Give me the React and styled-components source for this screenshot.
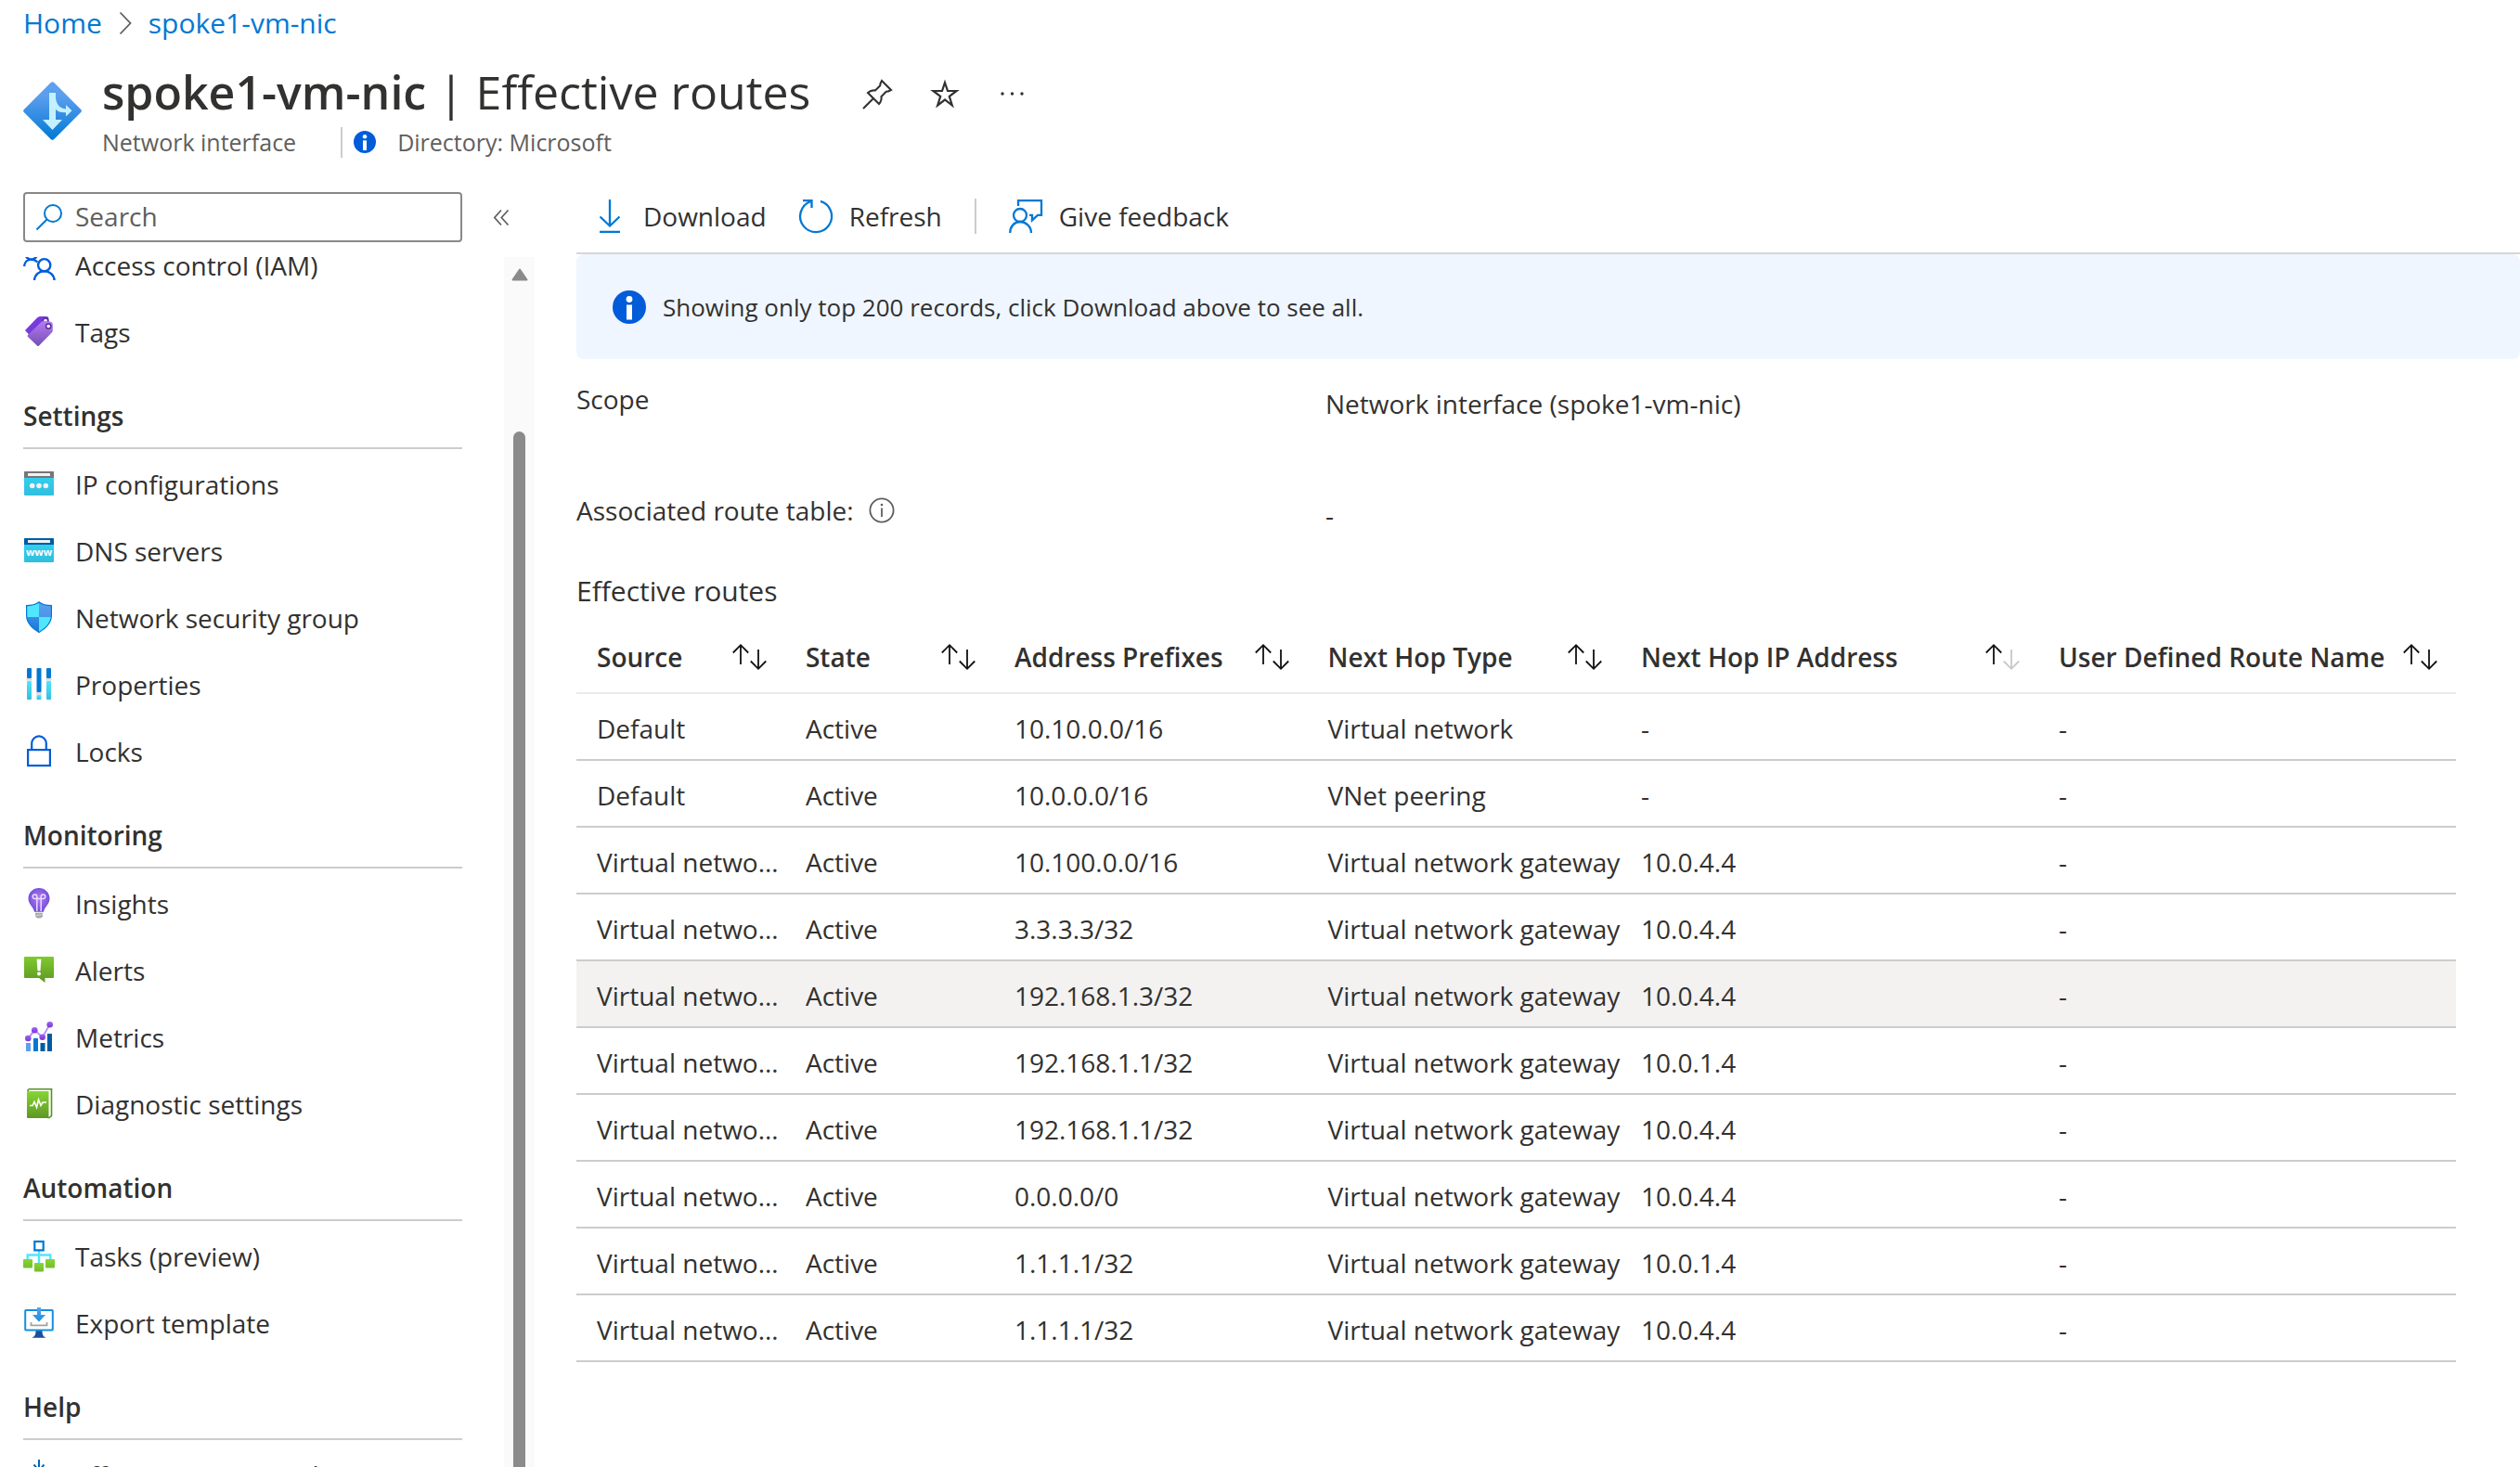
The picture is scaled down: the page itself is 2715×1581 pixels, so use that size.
import React from "react";
import styled, { createGlobalStyle, css } from "styled-components";

const color = {
  text: "#323130",
  muted: "#605e5c",
  link: "#0078d4",
  line: "#cccccc",
  softLine: "#ebebeb",
  info: "#015cda",
};

const GlobalStyle = createGlobalStyle`
  *, *::before, *::after { box-sizing: border-box; }
  body {
    margin: 0;
    background: #ffffff;
    color: ${color.text};
    font-family: "Open Sans", "Noto Sans", sans-serif;
    font-size: 28px;
    line-height: 40px;
  }
  a { color: inherit; text-decoration: none; }
  button {
    font: inherit;
    color: inherit;
    background: none;
    border: 0;
    padding: 0;
    cursor: pointer;
  }
  svg { display: block; flex: none; overflow: visible; }
`;

const Page = styled.div`
  display: flex;
  flex-direction: column;
  height: 100vh;
  overflow: hidden;
`;

const Breadcrumb = styled.nav`
  display: flex;
  align-items: center;
  gap: 19px;
  height: 50px;
  padding: 0 25px;
  color: ${color.link};
  font-size: 30px;
`;

const Header = styled.header`
  display: flex;
  align-items: center;
  gap: 22px;
  padding: 15px 25px 23px;
`;

const TitleRow = styled.div`
  display: flex;
  align-items: center;
  gap: 56px;
`;

const Title = styled.h1`
  margin: 0;
  font-size: 50px;
  line-height: 68px;
  font-weight: 400;
  white-space: nowrap;

  strong { font-weight: 600; }
`;

const TitleActions = styled.div`
  display: flex;
  gap: 41px;
  padding-top: 3px;
`;

const Subtitle = styled.div`
  display: flex;
  align-items: center;
  height: 40px;
  color: ${color.muted};
  font-size: 25px;
`;

const Directory = styled.span`
  display: flex;
  align-items: center;
  gap: 23px;
  height: 33px;
  margin-left: 48px;
  padding-left: 12px;
  border-left: 2px solid ${color.line};
`;

const Body = styled.div`
  display: flex;
  flex: 1;
  min-height: 0;
`;

const Sidebar = styled.aside`
  display: flex;
  flex-direction: column;
  flex: none;
  width: 576px;
`;

const SearchRow = styled.div`
  display: flex;
  align-items: center;
  gap: 25px;
  padding: 11px 0 16px 25px;
`;

const SearchBox = styled.label`
  display: flex;
  align-items: center;
  gap: 14px;
  width: 473px;
  height: 54px;
  padding: 0 12px;
  border: 2px solid #8a8886;
  border-radius: 4px;

  input {
    flex: 1;
    min-width: 0;
    padding: 0 0 2px;
    border: 0;
    outline: 0;
    background: none;
    color: ${color.text};
    font: inherit;
  }
  input::placeholder { color: ${color.muted}; opacity: 1; }
`;

const IconButton = styled.button`
  display: flex;
  align-items: center;
  justify-content: center;
  width: ${(p) => p.$size}px;
  height: ${(p) => p.$size}px;
`;

const MenuViewport = styled.div`
  display: flex;
  flex: 1;
  min-height: 0;
  overflow: hidden;
`;

const Menu = styled.nav`
  flex: 1;
  margin-top: -27px;
  padding: 0 45px 0 25px;
`;

const MenuList = styled.ul`
  margin: 0;
  padding: 0;
  list-style: none;
`;

const MenuLink = styled.a`
  display: flex;
  align-items: center;
  gap: 22px;
  height: 72px;
  white-space: nowrap;
`;

const MenuHeading = styled.h2`
  margin: 0 0 2px;
  padding: 34px 0 14px;
  border-bottom: 2px solid ${color.line};
  font-size: 28px;
  line-height: 40px;
  font-weight: 600;
`;

const ScrollTrack = styled.div`
  display: flex;
  flex-direction: column;
  align-items: center;
  width: 33px;
  padding-top: 12px;
  background: #fafafa;
`;

const ScrollThumb = styled.div`
  flex: 1;
  width: 13px;
  margin-top: 162px;
  border-radius: 7px 7px 0 0;
  background: #8b8b8b;
`;

const Main = styled.main`
  flex: 1;
  min-width: 0;
  margin-left: 45px;
`;

const Toolbar = styled.div`
  display: flex;
  align-items: center;
  gap: 35px;
  height: 78px;
  padding: 0 18px 2px;
  border-bottom: 2px solid #d6d6d6;
`;

const ToolButton = styled.button`
  display: flex;
  align-items: center;
  gap: 18px;
`;

const ToolDivider = styled.span`
  width: 2px;
  height: 38px;
  background: ${color.line};
`;

const Banner = styled.div`
  display: flex;
  align-items: center;
  gap: 18px;
  height: 113px;
  padding: 0 39px;
  border-radius: 8px;
  background: #eff6ff;
  font-size: 26px;
`;

const Content = styled.div`
  padding: 23px 69px 0 0;
`;

const Facts = styled.dl`
  display: grid;
  grid-template-columns: 807px 1fr;
  row-gap: 75px;
  margin: 0;
`;

const FactName = styled.dt`
  display: flex;
  align-items: center;
  gap: 16px;
  height: 40px;
`;

const FactValue = styled.dd`
  margin: 0;
  padding-top: 5px;
`;

const SectionTitle = styled.h2`
  margin: 42px 0 11px;
  font-size: 30px;
  line-height: 40px;
  font-weight: 400;
`;

const Table = styled.table`
  width: 100%;
  table-layout: fixed;
  border-collapse: separate;
  border-spacing: 0;
`;

const HeadCell = styled.th`
  width: ${(p) => p.$share}%;
  height: 80px;
  padding: 2px 20px 0 22px;
  border-bottom: 2px solid ${color.softLine};
  font-weight: 600;
  text-align: left;
`;

const SortButton = styled.button`
  display: flex;
  align-items: center;
  justify-content: space-between;
  width: 100%;
  white-space: nowrap;
`;

const Row = styled.tr`
  ${(p) => p.$active && css`background: #f3f2f1;`}
`;

const Cell = styled.td`
  height: 72px;
  padding: 3px 0 0 22px;
  border-bottom: 2px solid ${color.line};
  overflow: hidden;
  white-space: nowrap;
  text-overflow: ellipsis;
`;

/* Header and toolbar drawings */

const Logo = () => (
  <svg width="63" height="63" viewBox="0 0 63 63" aria-hidden="true">
    <defs>
      <linearGradient id="logo" x1="0" y1="0" x2="0" y2="1">
        <stop offset="0" stopColor="#5ea0ef" />
        <stop offset="0.25" stopColor="#5a9eee" />
        <stop offset="1" stopColor="#0078d4" />
      </linearGradient>
    </defs>
    <path d="M30 .8Q31.500-.5 33 .8L62.200 30Q63.500 31.500 62.200 33L33 62.200Q31.500 63.500 30 62.200L.8 33Q-.5 31.500.8 30Z" fill="url(#logo)" />
    <path d="M28 12h7v6c1 6 4 11 11 11.500V25l6.500 6.200L46 37.500v-4.200c-5 .2-9-1-11-3.500V41h7L31.500 52 21 41h7Z" fill="#c3f1ff" />
  </svg>
);

const InfoBadge = ({ size }) => (
  <svg width={size} height={size} viewBox="0 0 36 36" aria-hidden="true">
    <circle cx="18" cy="18" r="18" fill={color.info} />
    <circle cx="18" cy="9.500" r="3.400" fill="#fff" />
    <rect x="15" y="15.500" width="6" height="16" fill="#fff" />
  </svg>
);

const InfoOutline = () => (
  <svg width="28" height="28" viewBox="0 0 28 28" fill="none" stroke="#605e5c" strokeWidth="1.800" aria-hidden="true">
    <circle cx="14" cy="14" r="12.600" />
    <path d="M14 11.500v9.500" />
    <circle cx="14" cy="8" r="1.300" fill="#605e5c" stroke="none" />
  </svg>
);

const Chevron = () => (
  <svg width="12" height="24" viewBox="0 0 12 24" fill="none" stroke="#605e5c" strokeWidth="1.800" aria-hidden="true">
    <path d="M.5.500 11.500 12 .5 23.500" />
  </svg>
);

const Pin = () => (
  <svg width="32" height="32" viewBox="0 0 32 32" fill="none" stroke={color.text} strokeWidth="2.100" aria-hidden="true">
    <path d="M21 2 31 12l-3 1.500c-1 .2-1.800-.2-2.500.5L20.500 19c.5 3-.2 5.500-2.500 8L6 15c2.500-2.300 5-3 8-2.500l5-5c.7-.7.300-1.500.5-2.500ZM12 21 1 32" />
  </svg>
);

const Star = () => (
  <svg width="32" height="32" viewBox="0 0 32 32" fill="none" stroke={color.text} strokeWidth="2.200" strokeMiterlimit="8" aria-hidden="true">
    <path d="m16 4 3 9h9.500l-7.700 5.800 3 9.700L16 22.500l-7.800 6 3-9.700L3.500 13H13Z" />
  </svg>
);

const Dots = () => (
  <svg width="32" height="32" viewBox="0 0 32 32" fill={color.text} aria-hidden="true">
    <circle cx="5" cy="16" r="1.700" />
    <circle cx="15.500" cy="16" r="1.700" />
    <circle cx="26" cy="16" r="1.700" />
  </svg>
);

const SearchIcon = () => (
  <svg width="28" height="28" viewBox="0 0 28 28" fill="none" stroke={color.link} strokeWidth="2" aria-hidden="true">
    <circle cx="18" cy="10" r="9" />
    <path d="M11.500 16.500.5 27.500" />
  </svg>
);

const Collapse = () => (
  <svg width="16" height="17" viewBox="0 0 16 17" fill="none" stroke="#605e5c" strokeWidth="1.700" aria-hidden="true">
    <path d="M8 .5.8 8.500 8 16.500M15.500.500 8.300 8.500l7.200 8" />
  </svg>
);

const ScrollUp = () => (
  <svg width="18" height="14" viewBox="0 0 18 14" aria-hidden="true">
    <path d="M9 1.500 16.500 12.500h-15Z" fill="#8b8b8b" stroke="#8b8b8b" strokeWidth="2" strokeLinejoin="round" />
  </svg>
);

const ToolIcon = ({ children }) => (
  <svg width="36" height="36" viewBox="0 0 36 36" fill="none" stroke={color.link} strokeWidth="2.300" aria-hidden="true">
    {children}
  </svg>
);

const Download = () => (
  <ToolIcon>
    <path d="M18 0v28M7.500 18.500 18 28.500l10.500-10M7 34.800h22" />
  </ToolIcon>
);

const Refresh = () => (
  <ToolIcon>
    <path d="M23 1.800A17 17 0 1 1 12 2.200M4 1.200h9.500V9" />
  </ToolIcon>
);

const Feedback = () => (
  <ToolIcon>
    <circle cx="12" cy="17" r="7" />
    <path d="M1.200 36c0-7 4.800-12 10.800-12s12 5 12 12M10 7V1.200h25v15.600h-4l-6 5.500v-5.500h-3" />
  </ToolIcon>
);

const Sort = ({ dimDown }) => (
  <svg width="37" height="28" viewBox="0 0 37 28" fill="none" strokeWidth="1.800" aria-hidden="true">
    <path d="M9 22V1.500M.8 9.500 9 1.200l8.200 8.300" stroke="#111" />
    <path d="M28 6v20.500M19.800 18.500l8.200 8.300 8.200-8.300" stroke={dimDown ? "#c8c8c8" : "#111"} />
  </svg>
);

/* Menu drawings, all on a 34 x 34 board */

const MenuSvg = ({ children }) => (
  <svg width="34" height="34" viewBox="0 0 34 34" fill="none" aria-hidden="true">
    {children}
  </svg>
);

const Fade = ({ id, from, to }) => (
  <linearGradient id={id} x1="0" y1="0" x2="0" y2="1">
    <stop offset="0" stopColor={from} />
    <stop offset="1" stopColor={to} />
  </linearGradient>
);

const AccessIcon = () => (
  <MenuSvg>
    <g stroke={color.info} strokeWidth="2.400">
      <circle cx="8.700" cy="4" r="6.600" />
      <path d="M1 18C1.500 13.500 4.500 10.600 8.700 10.600c3 0 5 .9 6.600 3" />
      <circle cx="22.700" cy="16.700" r="6.600" />
      <path d="M12 33c.6-6 5-9.700 10.700-9.700S33 27 33.600 33" />
    </g>
  </MenuSvg>
);

const TagsIcon = () => (
  <MenuSvg>
    <defs><Fade id="tag" from="#b77af4" to="#7350b0" /></defs>
    <path d="M2 15 15 1.500Q16.500 0 18 0h7q2 0 2.500 2L28 9 12 26Z" fill="#773adc" />
    <circle cx="24" cy="4.500" r="2.600" fill="#fff" stroke="#552f99" strokeWidth="1.500" />
    <path d="M5 20 19.500 6Q20.500 5 22 5l7 .5Q31.500 6 31.800 8v7q0 1.500-1 2.500L17 31.500q-1 1-2 0L5 22Q4 21 5 20Z" fill="url(#tag)" />
    <circle cx="27.200" cy="10.500" r="2.600" fill="#fff" stroke="#552f99" strokeWidth="1.500" />
  </MenuSvg>
);

const BrowserIcon = ({ id, bar, children }) => (
  <MenuSvg>
    <defs><Fade id={id} from="#32d4f5" to="#32bedd" /></defs>
    <rect x="1" y="3" width="32" height="26" rx="1" fill={`url(#${id})`} />
    <path d="M1 10V4q0-1 1-1h30q1 0 1 1v6Z" fill={bar} />
    <rect x="5" y="5" width="24" height="3" rx=".5" fill="#f2f2f2" />
    {children}
  </MenuSvg>
);

const IpIcon = () => (
  <BrowserIcon id="ip" bar="#767676">
    <g fill="#f2f2f2">
      <circle cx="9.700" cy="18.500" r="2.800" />
      <circle cx="17" cy="18.500" r="2.800" />
      <circle cx="24.300" cy="18.500" r="2.800" />
    </g>
  </BrowserIcon>
);

const DnsLabel = styled.text`
  font-family: "Open Sans", sans-serif;
  font-size: 11px;
  font-weight: 700;
  fill: #ffffff;
`;

const DnsIcon = () => (
  <BrowserIcon id="dns" bar="#005ba1">
    <DnsLabel x="17" y="22" textAnchor="middle">www</DnsLabel>
  </BrowserIcon>
);

const ShieldIcon = () => (
  <MenuSvg>
    <defs>
      <clipPath id="shield"><path d="M17 .8C13.500 3 9 4.200 4.200 4.300V14.500C4.200 23 12 28.800 17 31.800 22 28.800 29.800 23 29.800 14.500V4.300C25 4.200 20.500 3 17 .8Z" /></clipPath>
      <Fade id="shieldTop" from="#5ea0ef" to="#4a94e8" />
      <Fade id="shieldLow" from="#3a8ce4" to="#1078d4" />
    </defs>
    <path d="M17-1C13 2 9 3 3 3V14.500C3 24 12 30 17 33.200 22 30 31 24 31 14.500V3C25 3 21 2 17-1Z" fill="#0078d4" />
    <g clipPath="url(#shield)">
      <rect x="3" y="0" width="14" height="16" fill="#50e6ff" />
      <rect x="17" y="0" width="14" height="16" fill="url(#shieldTop)" />
      <rect x="3" y="16" width="14" height="17" fill="url(#shieldLow)" />
      <rect x="17" y="16" width="14" height="17" fill="#50e6ff" />
    </g>
  </MenuSvg>
);

const PropertiesIcon = () => (
  <MenuSvg>
    <defs><Fade id="prop" from="#50e6ff" to="#32bedd" /></defs>
    {[[4, 10], [14.5, 25], [25, 10]].map(([x, y]) => (
      <g key={x}>
        <rect x={x} y="-1" width="5" height={y + 1} rx="1" fill="#0078d4" />
        <rect x={x} y={y + 3} width="5" height={30 - y} rx="1" fill="url(#prop)" />
        <rect x={x - 0.5} y={y} width="6" height="2.800" rx=".8" fill="#dcdcdc" />
      </g>
    ))}
  </MenuSvg>
);

const LockIcon = () => (
  <MenuSvg>
    <g stroke={color.info} strokeWidth="2.200">
      <rect x="5.100" y="15.100" width="23.800" height="17" />
      <path d="M9.200 15V8.200a7.800 7.800 0 0 1 15.600 0V15" />
    </g>
  </MenuSvg>
);

const InsightsIcon = () => (
  <MenuSvg>
    <defs>
      <radialGradient id="bulb" cx=".5" cy=".45" r=".6">
        <stop offset="0" stopColor="#b77af4" />
        <stop offset="1" stopColor="#6548d6" />
      </radialGradient>
    </defs>
    <path d="M17 0C23 0 28.500 4.700 28.500 11.300 28.500 18 23 20 22 25.800H12C11 20 5.500 18 5.500 11.300 5.500 4.700 11 0 17 0Z" fill="url(#bulb)" />
    <path d="M14.800 25V11.500h-2.400a2.300 2.300 0 1 1 2.400-2.300v2.300h4.400V9.200a2.300 2.300 0 1 1 2.400 2.300h-2.400V25" stroke="#e9dcfb" strokeWidth="1.500" />
    <path d="M13 26.800h8v3.600L19 32.500h-4l-2-2.100Z" fill="#a9a9a9" />
    <path d="M13 29.800l8-1.200" stroke="#e0e0e0" strokeWidth=".8" />
  </MenuSvg>
);

const AlertsIcon = () => (
  <MenuSvg>
    <defs><Fade id="alert" from="#7fcb2d" to="#5e9624" /></defs>
    <path d="M2 2h30q1 0 1 1v21q0 1-1 1h-8.500v5L17 25H2q-1 0-1-1V3q0-1 1-1Z" fill="url(#alert)" />
    <path d="M14.600 4.800h4.800l-.9 12.500h-3Z" fill="#fff" />
    <circle cx="17" cy="20.500" r="2" fill="#fff" />
  </MenuSvg>
);

const MetricsIcon = () => (
  <MenuSvg>
    <defs><Fade id="dot" from="#a067f0" to="#7a35d6" /></defs>
    <rect x="3" y="23" width="5" height="9" fill="#5ea0ef" />
    <rect x="11" y="18" width="5" height="14" fill="#0078d4" />
    <rect x="18.500" y="23" width="5" height="9" fill="#005ba1" />
    <rect x="26" y="13" width="5" height="19" fill="#005ba1" />
    <path d="M5.300 18 12.300 9.300 20.700 16.700 28.700 3" stroke="#b796f9" strokeWidth="2" />
    <g fill="url(#dot)">
      <circle cx="5.300" cy="18" r="3.300" />
      <circle cx="12.300" cy="9.300" r="3.300" />
      <circle cx="20.700" cy="16.700" r="3.300" />
      <circle cx="28.700" cy="3.300" r="3.300" />
    </g>
  </MenuSvg>
);

const DiagnosticIcon = () => (
  <MenuSvg>
    <defs><Fade id="book" from="#86d633" to="#5e9624" /></defs>
    <path d="M5 3Q5 .8 7 .8H30.500V29.500L28 31.500H26" fill="#fff" stroke="#57911f" strokeWidth="1.600" />
    <rect x="4" y="3" width="23.500" height="29" rx=".8" fill="url(#book)" />
    <path d="M7 18.500h3l2-4 2.500 6 2-8.500 2.500 6.500 2-3.500h4" stroke="#fff" strokeWidth="1.600" />
  </MenuSvg>
);

const TasksIcon = () => (
  <MenuSvg>
    <defs><Fade id="task" from="#86d633" to="#76bc2d" /></defs>
    <path d="M17 11v14M4.700 21v-5.500h24.600V21" stroke="#50e6ff" strokeWidth="2.400" />
    <rect x="12.300" y="1" width="9.400" height="9.400" fill="#fff" stroke="#0078d4" strokeWidth="2.200" />
    <rect x="0" y="20" width="10" height="9.500" rx="1" fill="url(#task)" />
    <rect x="12" y="24" width="10" height="9.500" rx="1" fill="url(#task)" />
    <rect x="24" y="20" width="10" height="9.500" rx="1" fill="url(#task)" />
  </MenuSvg>
);

const ExportIcon = () => (
  <MenuSvg>
    <defs><Fade id="arrow" from="#5ea0ef" to="#1490df" /></defs>
    <path d="M13.500 25h7c0 3.500.5 6.500 4.500 7.800H9c4-1.300 4.500-4.300 4.500-7.800Z" fill="#1b4f9c" />
    <rect x="2.200" y="3" width="29.600" height="21.500" rx=".8" fill="#fff" stroke="#1490df" strokeWidth="2" />
    <path d="M15 0h4v8h5l-7 7.500L10 8h5Z" fill="url(#arrow)" />
    <path d="M8.500 16v3.300h17V16" stroke="#a3a3a3" strokeWidth="1.800" />
  </MenuSvg>
);

const RulesIcon = () => (
  <MenuSvg>
    <g stroke="#0067b8" strokeWidth="2">
      <path d="M17 0v34M11.500 5.500 17 12l5.500-6.500M0 17h34M5.500 11.500 12 17l-6.500 5.500M28.500 11.500 22 17l6.500 5.500M11.500 28.500 17 22l5.500 6.500" />
    </g>
  </MenuSvg>
);

const menu = [
  { items: [["Access control (IAM)", AccessIcon], ["Tags", TagsIcon]] },
  {
    heading: "Settings",
    items: [
      ["IP configurations", IpIcon],
      ["DNS servers", DnsIcon],
      ["Network security group", ShieldIcon],
      ["Properties", PropertiesIcon],
      ["Locks", LockIcon],
    ],
  },
  {
    heading: "Monitoring",
    items: [
      ["Insights", InsightsIcon],
      ["Alerts", AlertsIcon],
      ["Metrics", MetricsIcon],
      ["Diagnostic settings", DiagnosticIcon],
    ],
  },
  {
    heading: "Automation",
    items: [["Tasks (preview)", TasksIcon], ["Export template", ExportIcon]],
  },
  { heading: "Help", items: [["Effective security rules", RulesIcon]] },
];

const columns = [
  { name: "Source", share: 11.11 },
  { name: "State", share: 11.11 },
  { name: "Address Prefixes", share: 16.67 },
  { name: "Next Hop Type", share: 16.67 },
  { name: "Next Hop IP Address", share: 22.22, ascending: true },
  { name: "User Defined Route Name", share: 22.22 },
];

const gateway = "Virtual network gateway";
const routes = [
  ["Default", "Active", "10.10.0.0/16", "Virtual network", "-", "-"],
  ["Default", "Active", "10.0.0.0/16", "VNet peering", "-", "-"],
  [gateway, "Active", "10.100.0.0/16", gateway, "10.0.4.4", "-"],
  [gateway, "Active", "3.3.3.3/32", gateway, "10.0.4.4", "-"],
  [gateway, "Active", "192.168.1.3/32", gateway, "10.0.4.4", "-"],
  [gateway, "Active", "192.168.1.1/32", gateway, "10.0.1.4", "-"],
  [gateway, "Active", "192.168.1.1/32", gateway, "10.0.4.4", "-"],
  [gateway, "Active", "0.0.0.0/0", gateway, "10.0.4.4", "-"],
  [gateway, "Active", "1.1.1.1/32", gateway, "10.0.1.4", "-"],
  [gateway, "Active", "1.1.1.1/32", gateway, "10.0.4.4", "-"],
];
const activeRoute = 4;

export default function App() {
  return (
    <Page>
      <GlobalStyle />
      <Breadcrumb aria-label="Breadcrumb">
        <a href="#home">Home</a>
        <Chevron />
        <a href="#nic">spoke1-vm-nic</a>
      </Breadcrumb>

      <Header>
        <Logo />
        <div>
          <TitleRow>
            <Title><strong>spoke1-vm-nic</strong> | Effective routes</Title>
            <TitleActions>
              <IconButton $size={32} aria-label="Pin"><Pin /></IconButton>
              <IconButton $size={32} aria-label="Add to favorites"><Star /></IconButton>
              <IconButton $size={32} aria-label="More"><Dots /></IconButton>
            </TitleActions>
          </TitleRow>
          <Subtitle>
            Network interface
            <Directory>
              <InfoBadge size={24} />
              Directory: Microsoft
            </Directory>
          </Subtitle>
        </div>
      </Header>

      <Body>
        <Sidebar>
          <SearchRow>
            <SearchBox>
              <SearchIcon />
              <input type="search" placeholder="Search" aria-label="Search" />
            </SearchBox>
            <IconButton $size={34} aria-label="Collapse menu"><Collapse /></IconButton>
          </SearchRow>
          <MenuViewport>
            <Menu aria-label="Resource menu">
              {menu.map(({ heading, items }) => (
                <React.Fragment key={heading || "top"}>
                  {heading && <MenuHeading>{heading}</MenuHeading>}
                  <MenuList>
                    {items.map(([label, Icon]) => (
                      <li key={label}>
                        <MenuLink href="#menu"><Icon />{label}</MenuLink>
                      </li>
                    ))}
                  </MenuList>
                </React.Fragment>
              ))}
            </Menu>
            <ScrollTrack>
              <ScrollUp />
              <ScrollThumb />
            </ScrollTrack>
          </MenuViewport>
        </Sidebar>

        <Main>
          <Toolbar>
            <ToolButton><Download />Download</ToolButton>
            <ToolButton><Refresh />Refresh</ToolButton>
            <ToolDivider />
            <ToolButton><Feedback />Give feedback</ToolButton>
          </Toolbar>
          <Banner role="status">
            <InfoBadge size={36} />
            Showing only top 200 records, click Download above to see all.
          </Banner>
          <Content>
            <Facts>
              <FactName>Scope</FactName>
              <FactValue>Network interface (spoke1-vm-nic)</FactValue>
              <FactName>Associated route table: <InfoOutline /></FactName>
              <FactValue>-</FactValue>
            </Facts>
            <SectionTitle>Effective routes</SectionTitle>
            <Table>
              <thead>
                <tr>
                  {columns.map(({ name, share, ascending }) => (
                    <HeadCell key={name} $share={share} scope="col">
                      <SortButton>{name}<Sort dimDown={ascending} /></SortButton>
                    </HeadCell>
                  ))}
                </tr>
              </thead>
              <tbody>
                {routes.map((route, r) => (
                  <Row key={r} $active={r === activeRoute}>
                    {route.map((value, c) => <Cell key={c}>{value}</Cell>)}
                  </Row>
                ))}
              </tbody>
            </Table>
          </Content>
        </Main>
      </Body>
    </Page>
  );
}
